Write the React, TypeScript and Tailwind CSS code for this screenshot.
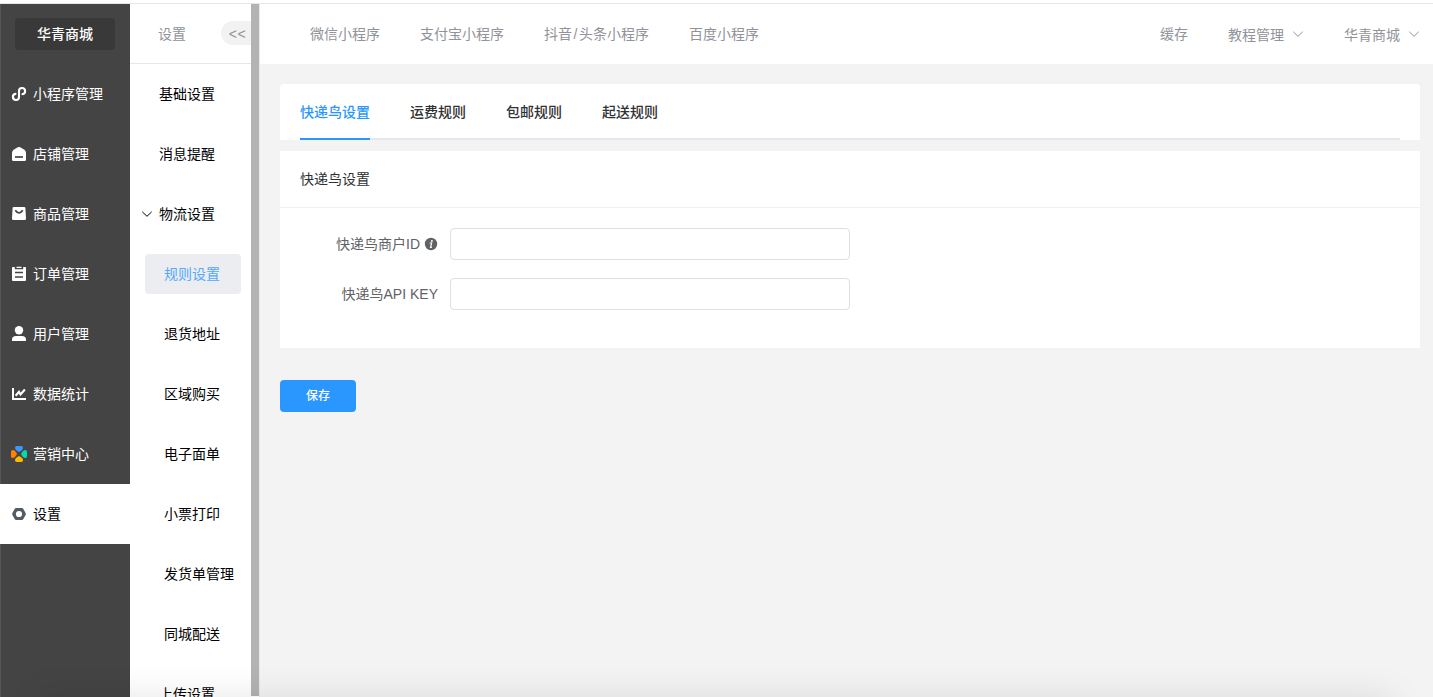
import { useState } from 'react';
import type { ReactNode } from 'react';

interface MenuItem {
  name: string;
  icon: ReactNode;
}

interface SubItem {
  name: string;
  child?: boolean;
  open?: boolean;
}

const iconClass = 'h-4 w-4 shrink-0';

const menus: MenuItem[] = [
  {
    name: '小程序管理',
    icon: (
      <svg viewBox="0 0 16 16" className={iconClass} fill="none" stroke="currentColor" strokeWidth="2.1" strokeLinecap="round">
        <path d="M4.500 7.900A3.050 3.050 0 1 0 8 11V5a3.050 3.050 0 1 1 3.500 3.100" />
      </svg>
    ),
  },
  {
    name: '店铺管理',
    icon: (
      <svg viewBox="0 0 16 16" className={iconClass}>
        <path d="M6.800 1.300q1.200-.6 2.400 0L13.400 3.700Q15 5 15 7v6.500A1.500 1.500 0 0 1 13.500 15h-11A1.500 1.500 0 0 1 1 13.500V7q0-2 1.600-3.300z" fill="currentColor" />
        <path d="M4 11h8" stroke="#444444" strokeWidth="1.700" />
      </svg>
    ),
  },
  {
    name: '商品管理',
    icon: (
      <svg viewBox="0 0 16 16" className={iconClass}>
        <path d="M2.800 1h10.400q1.100 0 1.200 1.100L15 12.500q0 1.500-1.500 1.500h-11Q1 14 1 12.500l.6-10.400Q1.700 1 2.800 1z" fill="currentColor" />
        <path d="M4.300 4.200q3.700 5.400 7.400 0" fill="none" stroke="#444444" strokeWidth="1.900" />
      </svg>
    ),
  },
  {
    name: '订单管理',
    icon: (
      <svg viewBox="0 0 16 16" className={iconClass}>
        <path d="M2 1h1.800v2.200h8.400V1H14q1 0 1 1v12q0 1-1 1H2q-1 0-1-1V2q0-1 1-1zM5.500.8h5V2h-5z" fill="currentColor" />
        <path d="M4 6.500h8M4 11h8" stroke="#444444" strokeWidth="1.700" />
      </svg>
    ),
  },
  {
    name: '用户管理',
    icon: (
      <svg viewBox="0 0 16 16" className={iconClass} fill="currentColor">
        <circle cx="8" cy="4.200" r="4.200" />
        <path d="M1 15v-1.500Q1 10 5 10h6q4 0 4 3.500V15z" />
      </svg>
    ),
  },
  {
    name: '数据统计',
    icon: (
      <svg viewBox="0 0 16 16" className={iconClass} fill="none" stroke="currentColor">
        <path d="M2 2v11h13" strokeWidth="2" />
        <path d="M4.600 9.800L8 5.900l1.500 2.600 4.400-5" strokeWidth="2.1" />
      </svg>
    ),
  },
  {
    name: '营销中心',
    icon: (
      <svg viewBox="0 0 16 16" className={iconClass}>
        <path d="M5.500 0h5Q12 .2 12 1.800q0 2.300-4 4.200-4-1.900-4-4.200Q4 .2 5.500 0z" fill="#3c96ff" />
        <path d="M16 5.500v5q-.2 1.500-1.800 1.500-2.300 0-4.200-4 1.900-4 4.200-4 1.600 0 1.800 1.500z" fill="#00dbac" />
        <path d="M5.500 16h5q1.500-.2 1.500-1.800 0-2.300-4-4.200-4 1.900-4 4.200 0 1.600 1.500 1.800z" fill="#ffb700" />
        <path d="M0 5.500v5Q.2 12 1.800 12 4.100 12 6 8 4.100 4 1.800 4 .2 4 0 5.500z" fill="#ff8106" />
      </svg>
    ),
  },
  {
    name: '设置',
    icon: (
      <svg viewBox="0 0 16 16" className={iconClass}>
        <path d="M5 2h6q.8 0 1.200.7L14.600 7q.5 1 0 2l-2.400 4.300q-.4.7-1.200.7H5q-.8 0-1.200-.7L1.400 9q-.5-1 0-2l2.400-4.300Q4.200 2 5 2zm3 2.900a3.100 3.100 0 1 0 0 6.200 3.100 3.100 0 0 0 0-6.200z" fill="#545c63" fillRule="evenodd" />
      </svg>
    ),
  },
];

const subMenus: SubItem[] = [
  { name: '基础设置' },
  { name: '消息提醒' },
  { name: '物流设置', open: true },
  { name: '规则设置', child: true },
  { name: '退货地址', child: true },
  { name: '区域购买', child: true },
  { name: '电子面单', child: true },
  { name: '小票打印', child: true },
  { name: '发货单管理', child: true },
  { name: '同城配送', child: true },
  { name: '上传设置' },
];

const platforms = ['微信小程序', '支付宝小程序', '抖音/头条小程序', '百度小程序'];
const tabs = ['快递鸟设置', '运费规则', '包邮规则', '起送规则'];

function Chevron({ className }: { className: string }) {
  return (
    <svg viewBox="0 0 12 12" className={className} fill="none" stroke="currentColor">
      <path d="M1.300 3.800L6 8.300l4.700-4.500" />
    </svg>
  );
}

function InfoIcon() {
  return (
    <svg viewBox="0 0 14 14" className="ml-1 h-[14px] w-[14px]">
      <circle cx="7" cy="7" r="6.200" fill="#606266" />
      <circle cx="7.900" cy="3.900" r="1" fill="#fff" />
      <path d="M5.700 6h1.900L6.600 10.400h1.300" fill="none" stroke="#fff" strokeWidth="1.200" />
    </svg>
  );
}

function FormRow({ label, info }: { label: string; info?: boolean }) {
  const [value, setValue] = useState('');

  return (
    <div className="flex h-8 items-center">
      <label className="flex w-[170px] items-center justify-end pr-3 text-[#606266]">
        {label}
        {info && <InfoIcon />}
      </label>
      <input
        value={value}
        onChange={(e) => setValue(e.target.value)}
        className="h-8 w-[400px] rounded border border-[#dcdfe6] bg-white px-3 outline-none focus:border-[#2997ff]"
      />
    </div>
  );
}

export default function App() {
  const [menu, setMenu] = useState('设置');
  const [subMenu, setSubMenu] = useState('规则设置');
  const [tab, setTab] = useState(tabs[0]);

  return (
    <div className="relative flex h-screen flex-col overflow-hidden bg-white pt-[3px] font-['Liberation_Sans','Noto_Sans_CJK_SC',sans-serif] text-sm leading-5">
      <div className="h-px shrink-0 bg-[#e6e6e6]" />

      <div className="flex min-h-0 flex-1">
        {/* Main menu */}
        <aside className="flex w-[130px] shrink-0 flex-col bg-[#444444] text-white">
          <div className="flex h-[60px] shrink-0 items-center border-l border-[#555555] pl-3.5">
            <div className="flex h-8 w-[100px] items-center justify-center rounded bg-[#393939] font-medium">华青商城</div>
          </div>
          {menus.map((item) => (
            <button
              key={item.name}
              onClick={() => setMenu(item.name)}
              className={`flex h-[60px] shrink-0 items-center gap-1.5 border-l pl-2.5 ${
                menu === item.name ? 'border-white bg-white text-black' : 'border-[#555555]'
              }`}
            >
              {item.icon}
              {item.name}
            </button>
          ))}
          <div className="flex-1 border-l border-[#555555]" />
        </aside>

        {/* Second level menu */}
        <aside className="flex w-[121px] shrink-0 flex-col overflow-hidden">
          <div className="flex h-[60px] shrink-0 items-center justify-between border-b border-[#e6e6e6] pl-7 text-[#909399]">
            <span>设置</span>
            <span className="mb-px flex h-6 w-[30px] items-center justify-center rounded-l-xl bg-[#f2f2f2] pl-[3px] pt-0.5 tracking-[0.5px]">
              &lt;&lt;
            </span>
          </div>
          {subMenus.map((item) => (
            <div key={item.name} className="flex h-[60px] shrink-0 items-center">
              {item.child ? (
                <button
                  onClick={() => setSubMenu(item.name)}
                  className={`ml-[15px] flex h-10 w-24 items-center whitespace-nowrap rounded pl-[19px] ${
                    subMenu === item.name ? 'bg-[#ebedf1] text-[#53a8ff]' : 'text-black'
                  }`}
                >
                  {item.name}
                </button>
              ) : (
                <button className="flex items-center pl-[11px] text-black">
                  <span className="flex w-[18px]">{item.open && <Chevron className="h-3 w-3" />}</span>
                  {item.name}
                </button>
              )}
            </div>
          ))}
        </aside>
        <div className="mb-px w-2 shrink-0 bg-[#b3b3b3]" />

        <div className="flex min-w-0 flex-1 flex-col border-l border-[#e9e9e9] bg-[#f3f3f3]">
          <header className="flex h-[60px] shrink-0 items-center justify-between bg-white pl-[50px] pr-[13px] text-[#909399]">
            <nav className="flex gap-10">
              {platforms.map((name) => (
                <span key={name}>
                  {name.split('/').map((part, i) => (
                    <span key={part}>
                      {i > 0 && <span className="px-[1.5px]">/</span>}
                      {part}
                    </span>
                  ))}
                </span>
              ))}
            </nav>
            <div className="flex items-center">
              <span>缓存</span>
              <span className="ml-10 flex items-center gap-2 pt-0.5">
                教程管理
                <Chevron className="mb-0.5 h-3 w-3" />
              </span>
              <span className="ml-10 flex items-center gap-2 pt-0.5">
                华青商城
                <Chevron className="mb-0.5 h-3 w-3" />
              </span>
            </div>
          </header>

          <main className="flex flex-col items-stretch pl-5 pr-[13px] pt-5">
            <div className="h-14 rounded-t bg-white px-5">
              <div className="flex h-14 gap-10 border-b-2 border-[#e4e7ed]">
                {tabs.map((name) => (
                  <button
                    key={name}
                    onClick={() => setTab(name)}
                    className={`-mb-0.5 h-14 border-b-2 pt-0.5 font-medium ${
                      tab === name ? 'border-[#2997ff] text-[#2997ff]' : 'border-transparent text-[#303133]'
                    }`}
                  >
                    {name}
                  </button>
                ))}
              </div>
            </div>

            <section className="mt-[11px] h-[197px] bg-white">
              <h2 className="flex h-[57px] items-center border-b border-[#f2f2f2] px-5 text-[#303133]">快递鸟设置</h2>
              <div className="flex flex-col gap-[18px] pt-5">
                <FormRow label="快递鸟商户ID" info />
                <FormRow label="快递鸟API KEY" />
              </div>
            </section>

            <button className="mt-8 h-8 w-[76px] rounded bg-[#2997ff] text-xs font-medium text-white">保存</button>
          </main>
        </div>
      </div>

      {/* Soft shade along the bottom edge of the window */}
      <div className="pointer-events-none absolute inset-x-10 -bottom-10 h-10 shadow-[0_0_36px_rgba(0,0,0,0.1)]" />
    </div>
  );
}
